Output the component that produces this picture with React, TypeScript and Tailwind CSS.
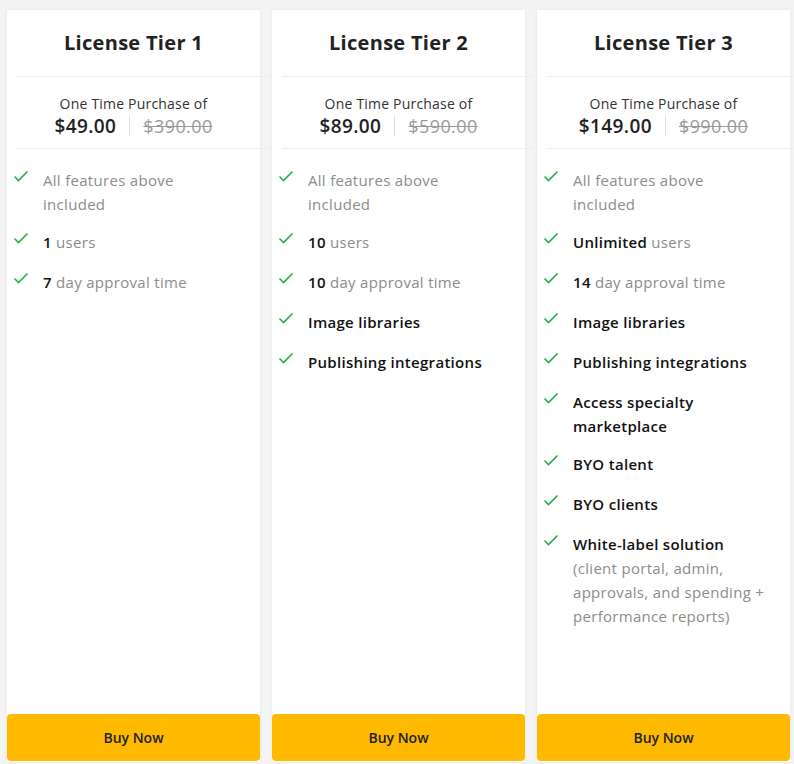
import React from "react";

type Item = { b?: string; g?: string; sub?: string };
const tiers: { name: string; price: string; old: string; items: Item[] }[] = [
  { name: "License Tier 1", price: "$49.00", old: "$390.00", items: [
    { g: "All features above included" }, { b: "1", g: " users" }, { b: "7", g: " day approval time" } ] },
  { name: "License Tier 2", price: "$89.00", old: "$590.00", items: [
    { g: "All features above included" }, { b: "10", g: " users" }, { b: "10", g: " day approval time" },
    { b: "Image libraries" }, { b: "Publishing integrations" } ] },
  { name: "License Tier 3", price: "$149.00", old: "$990.00", items: [
    { g: "All features above included" }, { b: "Unlimited", g: " users" }, { b: "14", g: " day approval time" },
    { b: "Image libraries" }, { b: "Publishing integrations" }, { b: "Access specialty marketplace" },
    { b: "BYO talent" }, { b: "BYO clients" },
    { b: "White-label solution", sub: "(client portal, admin, approvals, and spending + performance reports)" } ] },
];

const Check = () => (
  <svg width="16" height="12" viewBox="0 0 16 12" className="shrink-0">
    <path d="M1.5 6.5 L5.5 10.5 L14.5 1.5" fill="none" stroke="#22b04b" strokeWidth="1.6" />
  </svg>
);

export default function App() {
  return (
    <div className="w-[794px] h-[764px] bg-[#f4f4f4] flex gap-[12px] pl-[7px] pt-[10px]" style={{ fontFamily: '"Open Sans", "Noto Sans", sans-serif' }}>
      {tiers.map((t) => (
        <div key={t.name} className="w-[253px] h-[752px] bg-white flex flex-col shadow-[0_0_4px_rgba(0,0,0,0.06)]">
          <div className="h-[67px] flex items-center justify-center text-[20px] font-bold tracking-[0.3px] text-[#222] border-b border-[#eeeeee] ml-[10px] -mr-[10px] pr-[20px]">{t.name}</div>
          <div className="h-[72px] pt-[8px] flex flex-col items-center justify-center border-b border-[#eeeeee] ml-[10px] -mr-[10px] pr-[20px]">
            <div className="text-[14px] text-[#333] leading-[18px] tracking-[0.2px]">One Time Purchase of</div>
            <div className="flex items-center text-[19px] leading-[26px] tracking-[0.4px]">
              <span className="font-semibold text-[#222]">{t.price}</span>
              <span className="w-px h-[20px] bg-[#ddd] mx-[13px]" />
              <span className="line-through text-[#999] text-[18px]">{t.old}</span>
            </div>
          </div>
          <div className="flex-1 flex flex-col gap-[16px] pt-[21px] pl-[6px] pr-[8px]">
            {t.items.map((it, i) => (
              <div key={i} className="flex gap-[14px] text-[15px] leading-[24px] tracking-[0.3px]">
                <div className="pt-[0px] h-[24px]"><Check /></div>
                <div className="-mt-[2px] w-[196px]">
                  {it.b && <span className="font-semibold text-[#111]">{it.b}</span>}
                  {it.g && <span className="text-[#8c8c8c] font-medium">{it.g}</span>}
                  {it.sub && <div className="text-[#8c8c8c] font-medium">{it.sub}</div>}
                </div>
              </div>
            ))}
          </div>
          <button className="h-[47px] mb-[1px] rounded-[4px] bg-[#ffba00] text-[14px] font-semibold text-[#222]">Buy Now</button>
        </div>
      ))}
    </div>
  );
}
